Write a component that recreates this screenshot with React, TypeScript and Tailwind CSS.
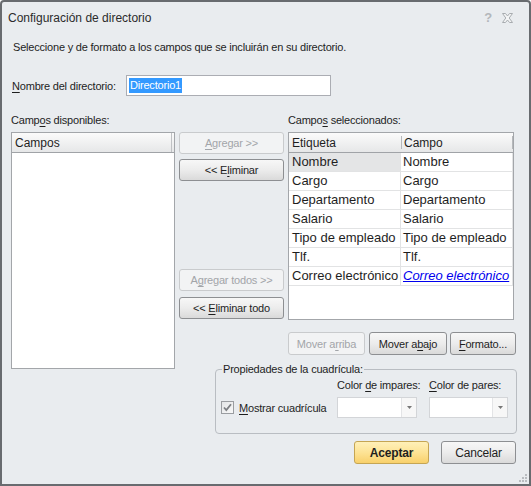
import type {ReactNode} from 'react'

const rows: [string, string][] = [
  ['Nombre', 'Nombre'],
  ['Cargo', 'Cargo'],
  ['Departamento', 'Departamento'],
  ['Salario', 'Salario'],
  ['Tipo de empleado', 'Tipo de empleado'],
  ['Tlf.', 'Tlf.'],
  ['Correo electrónico', 'Correo electrónico'],
]

function U({children}: {children: ReactNode}) {
  return <span className="underline underline-offset-2">{children}</span>
}

function Btn({
  children,
  disabled,
  primary,
  className = '',
}: {
  children: ReactNode
  disabled?: boolean
  primary?: boolean
  className?: string
}) {
  let look = 'border-[#8d8f92] bg-gradient-to-b from-[#f7f7f7] via-[#ececec] to-[#dadada] text-[#1e1e1e]'
  if (disabled) look = 'border-[#c9cbcd] bg-[#f2f3f4] text-[#a2a5a9]'
  if (primary) look = 'border-[#c5a553] bg-gradient-to-b from-[#fff0b8] via-[#fde395] to-[#f8d06a] font-bold text-[#1e1e1e]'
  return (
    <div className={`flex items-center justify-center rounded-[3px] border ${look} ${className}`}>
      <span className="whitespace-pre">{children}</span>
    </div>
  )
}

function Combo() {
  return (
    <div className="flex h-[21px] border border-[#d3d5d8] bg-white">
      <div className="flex-1" />
      <div className="flex w-[15px] items-center justify-center border-l border-[#e3e4e6] bg-[#f7f7f7]">
        <svg width="5" height="3" viewBox="0 0 5 3">
          <path d="M0 0h5L2.5 3z" fill="#777" />
        </svg>
      </div>
    </div>
  )
}

export default function App() {
  return (
    <div className="relative flex h-[486px] w-[531px] flex-col overflow-hidden rounded-t-[4px] border-2 border-[#686b6f] bg-[#e9ecef] font-['Liberation_Sans',Arial,sans-serif] text-[11px] leading-[14px] tracking-[-0.2px] text-[#1e1e1e]">
      {/* title bar */}
      <div className="flex h-[31px] shrink-0 items-center pl-[6px] pr-[16px]">
        <span className="text-[12px] tracking-normal text-[#2b2b2b]">Configuración de directorio</span>
        <span className="ml-auto text-[13px] font-bold text-[#b3b7bb]">?</span>
        <svg className="ml-[10px]" width="11" height="10" viewBox="0 0 11 10">
          <path
            d="M0.5 0.5h3l2 2.5 2-2.5h3l-3.3 4.5 3.3 4.5h-3l-2-2.5-2 2.5h-3l3.3-4.5z"
            fill="#f3f4f5"
            stroke="#a8acb0"
          />
        </svg>
      </div>

      <div className="flex flex-col pl-[9px]">
        <div className="ml-[2px] mt-[7px]">
          Seleccione y de formato a los campos que se incluirán en su directorio.
        </div>

        <div className="mt-[21px] flex h-[21px] items-center">
          <span className="ml-[1px] w-[114px]">
            <U>N</U>ombre del directorio:
          </span>
          <div className="flex h-[21px] w-[205px] items-center border border-[#abadb3] bg-white pl-[2px]">
            <span className="bg-[#3399ff] px-[1px] leading-[15px] text-white">Directorio1</span>
          </div>
        </div>

        <div className="mt-[17px] flex">
          <span className="w-[277px]">
            Camp<U>o</U>s disponibles:
          </span>
          <span>
            Campo<U>s</U> seleccionados:
          </span>
        </div>

        <div className="mt-[5px] flex items-start">
          {/* available list */}
          <div className="h-[237px] w-[164px] border border-[#a3a6aa] bg-white">
            <div className="flex h-[20px] border-b border-[#a0a3a7] bg-gradient-to-b from-[#fbfbfb] to-[#e6e7e8]">
              <div className="flex w-[160px] items-center border-r border-[#bfc1c4] pl-[3px] text-[12px] tracking-normal">
                Campos
              </div>
            </div>
          </div>

          {/* move buttons */}
          <div className="ml-[4px] flex w-[105px] flex-col">
            <Btn disabled className="h-[22px]">
              <U>A</U>gregar &gt;&gt;
            </Btn>
            <Btn className="mt-[5px] h-[22px]">
              &lt;&lt; E<U>l</U>iminar
            </Btn>
            <Btn disabled className="mt-[88px] h-[22px]">
              A<U>g</U>regar todos &gt;&gt;
            </Btn>
            <Btn className="mt-[6px] h-[22px]">
              {'<< '}
              <U>E</U>liminar todo
            </Btn>
          </div>

          {/* selected grid */}
          <div className="ml-[4px] flex w-[228px] flex-col">
            <div className="h-[188px] w-[226px] border border-[#a3a6aa] bg-white tracking-normal">
              <div className="flex h-[20px] border-b border-[#a0a3a7] bg-gradient-to-b from-[#fbfbfb] to-[#e6e7e8] text-[12px]">
                <div className="flex w-[112px] items-center pl-[3px]">Etiqueta</div>
                <div className="my-[3px] w-px bg-[#b5b8bb]" />
                <div className="flex w-[110px] items-center pl-[2px]">Campo</div>
                <div className="my-[3px] w-px bg-[#b5b8bb]" />
              </div>
              {rows.map(([a, b], i) => (
                <div key={a} className="flex h-[19px] text-[13px] leading-[18px]">
                  <div
                    className={`w-[112px] border-b border-r border-[#e2e3e4] pl-[3px] ${
                      i === 0 ? 'bg-[#e4e5e6]' : ''
                    }`}
                  >
                    {a}
                  </div>
                  <div className="w-[112px] border-b border-r border-[#e2e3e4] pl-[2px]">
                    {i === rows.length - 1 ? (
                      <span className="italic text-[#0000ee] underline">{b}</span>
                    ) : (
                      b
                    )}
                  </div>
                </div>
              ))}
            </div>
            <div className="mt-[12px] flex">
              <Btn disabled className="h-[23px] w-[77px]">
                Mover a<U>r</U>riba
              </Btn>
              <Btn className="ml-[4px] h-[23px] w-[78px]">
                Mover a<U>b</U>ajo
              </Btn>
              <Btn className="ml-[3px] h-[23px] w-[66px]">
                <U>F</U>ormato...
              </Btn>
            </div>
          </div>
        </div>

        {/* grid properties */}
        <fieldset className="-mt-[7px] ml-[204px] w-[302px] rounded-[4px] border border-[#b9bdc2] pb-[15px]">
          <legend className="ml-[6px] px-[1px]">Propiedades de la cuadrícula:</legend>
          <div className="mt-[2px] grid grid-cols-[121px_92px_1fr]">
            <div />
            <div>
              Color <U>d</U>e impares:
            </div>
            <div>
              <U>C</U>olor de pares:
            </div>
            <div className="mt-[5px] flex items-center pl-[5px]">
              <div className="flex h-[13px] w-[13px] items-center justify-center border border-[#9a9da1] bg-gradient-to-br from-[#e3e5e7] to-[#f8f8f8]">
                <svg width="9" height="9" viewBox="0 0 9 9">
                  <path d="M1 4.5l2.3 2.5L8 1.2" fill="none" stroke="#7c7f83" strokeWidth="1.8" />
                </svg>
              </div>
              <span className="ml-[5px]">
                <U>M</U>ostrar cuadrícula
              </span>
            </div>
            <div className="mt-[5px] w-[80px]">
              <Combo />
            </div>
            <div className="mt-[5px] w-[79px]">
              <Combo />
            </div>
          </div>
        </fieldset>

        <div className="mt-[7px] flex justify-end pr-[13px]">
          <Btn primary className="h-[23px] w-[75px] text-[12px]">
            Aceptar
          </Btn>
          <Btn className="ml-[12px] h-[23px] w-[75px] text-[12px]">
            Cancelar
          </Btn>
        </div>
      </div>

      <svg className="absolute bottom-[1px] right-[1px]" width="10" height="10" viewBox="0 0 10 10">
        <g fill="#b9bcc0">
          <rect x="7" y="1" width="2" height="2" />
          <rect x="4" y="4" width="2" height="2" />
          <rect x="7" y="4" width="2" height="2" />
          <rect x="1" y="7" width="2" height="2" />
          <rect x="4" y="7" width="2" height="2" />
          <rect x="7" y="7" width="2" height="2" />
        </g>
      </svg>
    </div>
  )
}
